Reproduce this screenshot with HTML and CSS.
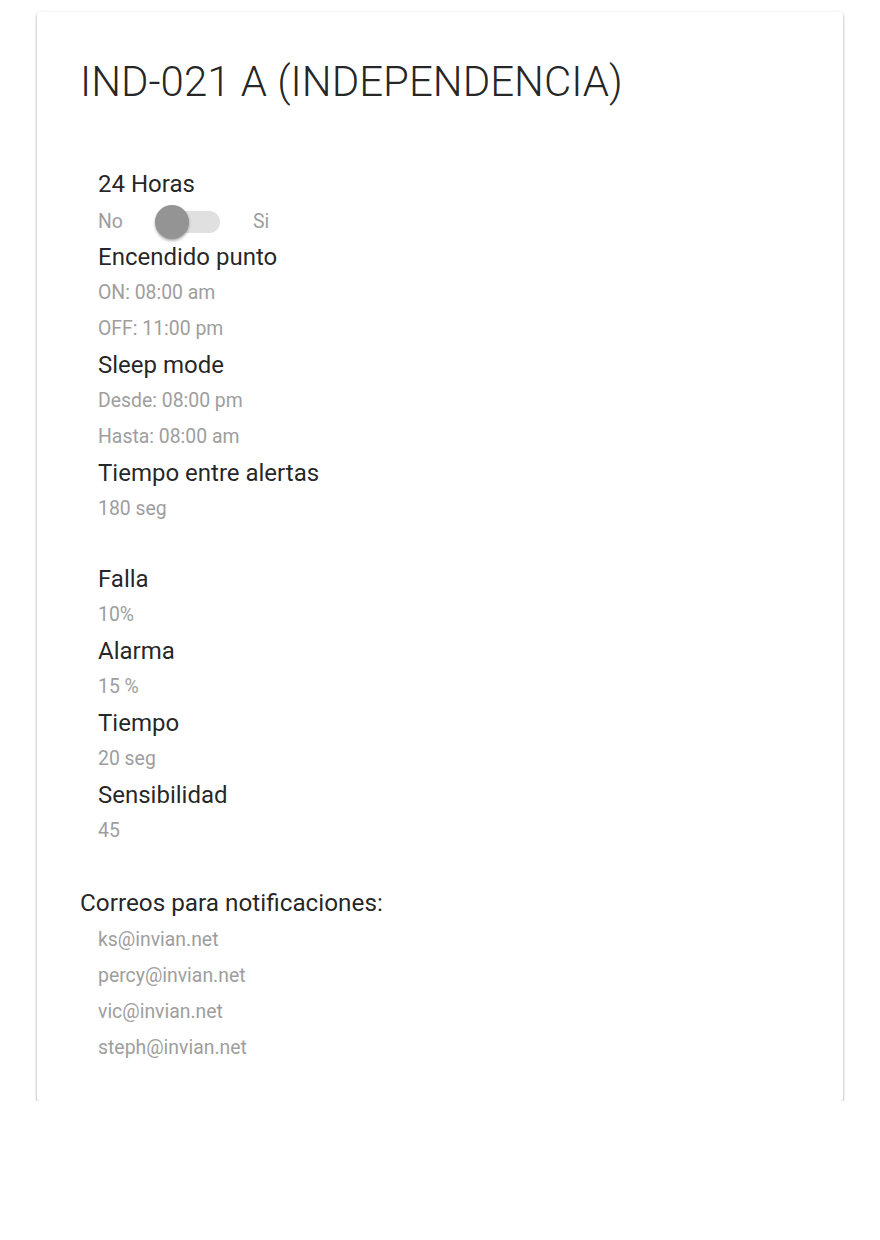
FILE: index.html
```html
<!DOCTYPE html>
<html lang="es">
<head>
<meta charset="utf-8">
<title>IND-021 A (INDEPENDENCIA)</title>
<link rel="stylesheet" href="styles.css">
</head>
<body>
<div class="card">
  <h1 class="title">IND-021 A (INDEPENDENCIA)</h1>

  <div class="group">
    <div class="label">24 Horas</div>
    <div class="switch-row">
      <span class="sub">No</span>
      <span class="switch"><span class="track"></span><span class="knob"></span></span>
      <span class="sub">Si</span>
    </div>
    <div class="label">Encendido punto</div>
    <div class="sub">ON: 08:00 am</div>
    <div class="sub">OFF: 11:00 pm</div>
    <div class="label">Sleep mode</div>
    <div class="sub">Desde: 08:00 pm</div>
    <div class="sub">Hasta: 08:00 am</div>
    <div class="label">Tiempo entre alertas</div>
    <div class="sub">180 seg</div>
  </div>

  <div class="group">
    <div class="label">Falla</div>
    <div class="sub">10%</div>
    <div class="label">Alarma</div>
    <div class="sub">15 %</div>
    <div class="label">Tiempo</div>
    <div class="sub">20 seg</div>
    <div class="label">Sensibilidad</div>
    <div class="sub">45</div>
  </div>

  <div class="mails">
    <div class="label mails-title">Correos para notificaciones:</div>
    <div class="sub">ks@invian.net</div>
    <div class="sub">percy@invian.net</div>
    <div class="sub">vic@invian.net</div>
    <div class="sub">steph@invian.net</div>
  </div>
</div>
</body>
</html>
```

FILE: styles.css
```css
html, body {
  margin: 0;
  padding: 0;
  background: #ffffff;
}

body {
  font-family: Roboto, "Liberation Sans", Arial, sans-serif;
  padding: 12px 37px 0;
}

.card {
  background: #ffffff;
  border-radius: 2px;
  box-shadow: 0 2px 3px 0 rgba(0,0,0,0.34), 0 0 3px 0 rgba(0,0,0,0.08);
  padding: 44px 43px 35px;
}

.title {
  margin: 0 0 58px;
  font-size: 42px;
  font-weight: 300;
  line-height: 52px;
  color: rgba(0,0,0,0.87);
}

.group {
  padding-left: 18px;
  margin-bottom: 34px;
}

.label {
  font-size: 24px;
  line-height: 36px;
  color: rgba(0,0,0,0.87);
}

.sub {
  font-size: 19.4px;
  line-height: 36px;
  color: #9e9e9e;
}

.switch-row {
  display: flex;
  align-items: center;
  height: 36px;
  padding-top: 2px;
  margin-bottom: -1px;
}

.switch {
  position: relative;
  display: inline-block;
  width: 62px;
  height: 22px;
  margin: 0 33px 0 35px;
}

.track {
  display: block;
  width: 100%;
  height: 100%;
  border-radius: 11px;
  background: #e0e0e0;
}

.knob {
  position: absolute;
  left: -3px;
  top: -6px;
  width: 34px;
  height: 34px;
  border-radius: 50%;
  background: #949494;
  box-shadow: 0 2px 3px rgba(0,0,0,0.25), 0 1px 2px rgba(0,0,0,0.12);
}

.mails .sub {
  padding-left: 18px;
}

.mails-title {
  font-size: 24.3px;
  line-height: 39px;
}
```
